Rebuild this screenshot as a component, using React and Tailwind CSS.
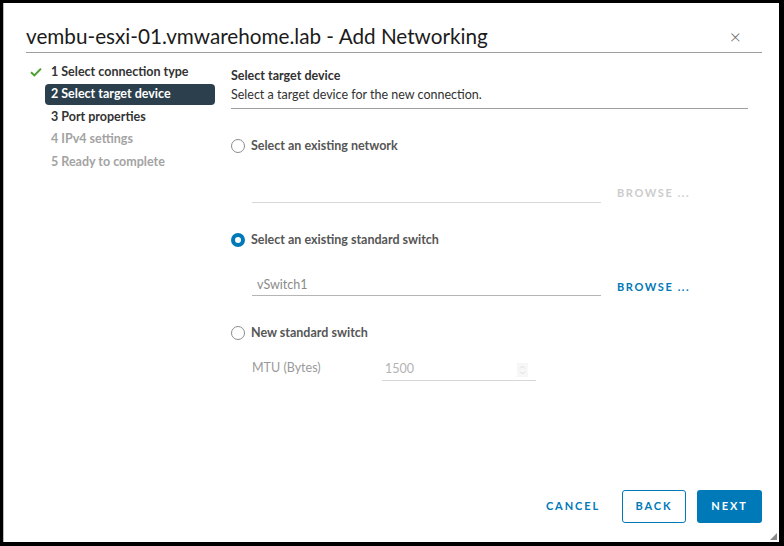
import React from 'react';

const font = { fontFamily: 'Lato, "Open Sans", sans-serif' };

function Radio({ checked }) {
  if (checked) {
    return (
      <span className="w-[14px] h-[14px] rounded-full bg-[#0079b8] flex items-center justify-center shrink-0">
        <span className="w-[6px] h-[6px] rounded-full bg-white" />
      </span>
    );
  }
  return <span className="w-[14px] h-[14px] rounded-full border border-[#8c8c8c] bg-white shrink-0" />;
}

function Option({ checked, children, className }) {
  return (
    <div className={`flex items-center gap-[6px] h-[16px] ${className}`}>
      <Radio checked={checked} />
      <span className="text-[12.5px] leading-[16px] font-bold text-[#565656]">{children}</span>
    </div>
  );
}

function NavItem({ children, active, done, disabled }) {
  return (
    <div className="flex items-center h-[22.5px]">
      <span className="w-[19px] flex justify-center">
        {done && (
          <svg width="12" height="10" viewBox="0 0 12 10">
            <path d="M1 5.2 L4.4 8.4 L11 1.6" fill="none" stroke="#48a02e" strokeWidth="2" />
          </svg>
        )}
      </span>
      <div
        className={`flex-1 h-[21px] flex items-center pl-[6px] rounded-[4px] text-[12.5px] font-bold ${
          active ? 'bg-[#2b3f4c] text-white' : disabled ? 'text-[#a3a3a3]' : 'text-[#333333]'
        }`}
      >
        {children}
      </div>
    </div>
  );
}

export default function App() {
  return (
    <div className="w-[784px] h-[546px] bg-black pt-[3px] pl-[3px] pr-[5px] pb-[4px]" style={font}>
      <div className="w-full h-full bg-white border-l border-[#bdbdbd] flex flex-col relative">
        {/* Header */}
        <div className="ml-[22px] mr-[17px] mt-[20px] flex items-end justify-between border-b border-[#9e9e9e] pb-[3px]">
          <h1 className="text-[20.7px] leading-[26px] text-[#1b1b1b] font-normal">
            vembu-esxi-01.vmwarehome.lab - Add Networking
          </h1>
          <span className="text-[#666] text-[20px] leading-[20px] mr-[21px] mb-[3px] font-light">×</span>
        </div>

        <div className="flex flex-1">
          {/* Steps */}
          <div className="w-[189px] ml-[22px] mt-[8px] flex flex-col">
            <NavItem done>1 Select connection type</NavItem>
            <NavItem active>2 Select target device</NavItem>
            <NavItem>3 Port properties</NavItem>
            <NavItem disabled>4 IPv4 settings</NavItem>
            <NavItem disabled>5 Ready to complete</NavItem>
          </div>

          {/* Content */}
          <div className="flex-1 ml-[16px] mr-[31px] mt-[14px] flex flex-col">
            <div className="border-b border-[#9e9e9e] pb-[5px]">
              <div className="text-[12.5px] font-bold text-[#313131] leading-[17px]">Select target device</div>
              <div className="text-[12.5px] text-[#313131] leading-[17px] mt-[2px]">
                Select a target device for the new connection.
              </div>
            </div>

            <Option className="mt-[29px]">Select an existing network</Option>
            <div className="flex items-end mt-[28px] ml-[21px]">
              <div className="w-[349px] h-[21px] border-b border-[#d7d7d7]" />
              <span className="ml-[16px] mb-[3px] text-[11px] leading-[14px] font-bold tracking-[1.6px] text-[#cccccc]">
                BROWSE ...
              </span>
            </div>

            <Option checked className="mt-[29px]">Select an existing standard switch</Option>
            <div className="flex items-end mt-[26px] ml-[21px]">
              <div className="w-[349px] h-[22px] border-b border-[#b5b5b5] text-[12.5px] text-[#8a8a8a] pl-[5px] pt-[1px] leading-[20px]">
                vSwitch1
              </div>
              <span className="ml-[16px] mb-[2px] text-[11px] leading-[14px] font-bold tracking-[1.6px] text-[#0079b8]">
                BROWSE ...
              </span>
            </div>

            <Option className="mt-[29px]">New standard switch</Option>
            <div className="flex items-end mt-[18px] ml-[21px]">
              <span className="w-[130px] text-[12.5px] leading-[16px] text-[#9a9a9a] mb-[5px]">MTU (Bytes)</span>
              <div className="w-[154px] h-[22px] border-b border-[#d7d7d7] flex items-center justify-between pl-[3px] pr-[8px]">
                <span className="text-[12.5px] text-[#b3b3b3]">1500</span>
                <svg width="11" height="14" viewBox="0 0 11 14">
                  <rect x="0" y="0" width="11" height="14" fill="#f7f7f7" />
                  <path d="M3 5.5 L5.5 3 L8 5.5 M3 8.5 L5.5 11 L8 8.5" fill="none" stroke="#dddddd" strokeWidth="1" />
                </svg>
              </div>
            </div>
          </div>
        </div>

        {/* Footer */}
        <div className="flex items-center justify-end gap-[11px] mr-[17px] mb-[19px]">
          <button className="h-[33px] w-[74px] mr-[1px] text-[11px] font-bold tracking-[1.9px] text-[#0079b8]">CANCEL</button>
          <button className="h-[33px] w-[64px] rounded-[3px] border border-[#0079b8] text-[11px] font-bold tracking-[1.9px] text-[#0079b8] bg-white">
            BACK
          </button>
          <button className="h-[33px] w-[65px] rounded-[3px] bg-[#0079b8] text-[11px] font-bold tracking-[1.9px] text-white">
            NEXT
          </button>
        </div>

        {/* Resize grip */}
        <svg className="absolute right-[2px] bottom-[2px]" width="7" height="7" viewBox="0 0 7 7">
          <path d="M7 0 L7 7 L0 7 Z" fill="#8a8a8a" />
        </svg>
      </div>
    </div>
  );
}
